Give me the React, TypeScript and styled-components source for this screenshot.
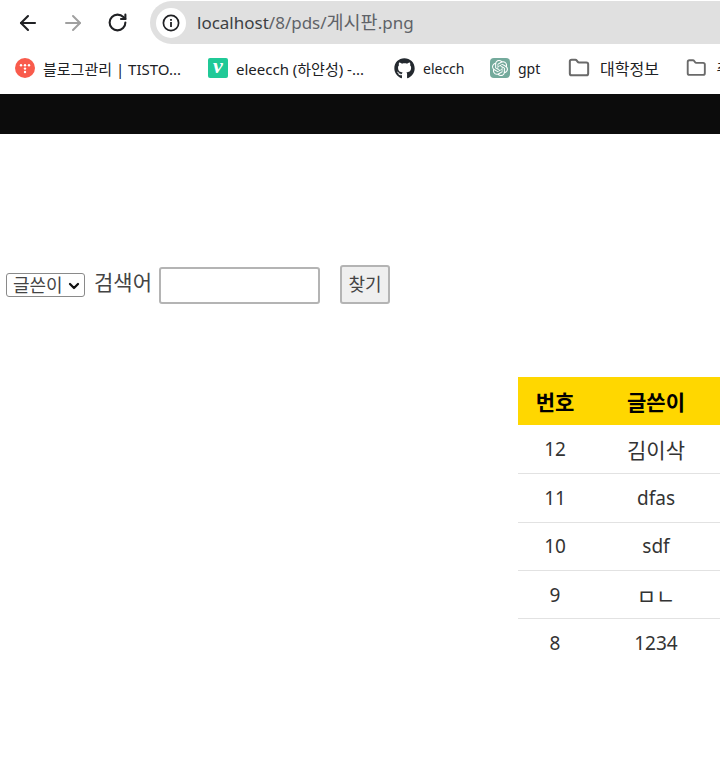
import styled, { createGlobalStyle } from "styled-components";
import { ArrowLeft, ArrowRight, RotateCw, Folder, ChevronDown } from "lucide-react";
import { FaGithub } from "react-icons/fa";
import { SiOpenai } from "react-icons/si";

const FONT = `"Malgun Gothic", "Noto Sans", "Noto Sans CJK KR", sans-serif`;

const rows = [
  { no: 12, writer: "김이삭", size: 21 },
  { no: 11, writer: "dfas", size: 19 },
  { no: 10, writer: "sdf", size: 19 },
  { no: 9, writer: "ㅁㄴ", size: 21 },
  { no: 8, writer: "1234", size: 19 },
];

const App = () => {
  return (
    <Page>
      <GlobalStyle />
      <Toolbar>
        <NavBtn>
          <ArrowLeft size={24} strokeWidth={2.1} color="#202124" />
        </NavBtn>
        <NavBtn>
          <ArrowRight size={24} strokeWidth={2} color="#a0a0a0" />
        </NavBtn>
        <NavBtn>
          <RotateCw size={21} strokeWidth={2.4} color="#202124" />
        </NavBtn>
        <UrlBar>
          <InfoCircle>
            <svg width="20" height="20" viewBox="0 0 20 20">
              <circle cx="10" cy="10" r="7.6" fill="none" stroke="#202124" strokeWidth="1.7" />
              <rect x="9.1" y="9" width="1.8" height="5" fill="#202124" />
              <rect x="9.1" y="6" width="1.8" height="1.8" fill="#202124" />
            </svg>
          </InfoCircle>
          <UrlText>
            <UrlHost>localhost</UrlHost>/8/pds/<UrlHangul>게시판</UrlHangul>.png
          </UrlText>
        </UrlBar>
      </Toolbar>
      <Bookmarks>
        <Bookmark $width={193}>
          <TistoryIcon viewBox="0 0 20 20">
            <circle cx="10" cy="10" r="10" fill="#f95b4c" />
            <circle cx="6" cy="7.2" r="1.2" fill="#fff" />
            <circle cx="10" cy="7.2" r="1.2" fill="#fff" />
            <circle cx="14" cy="7.2" r="1.2" fill="#fff" />
            <circle cx="10" cy="10.6" r="1.2" fill="#fff" />
            <circle cx="10" cy="14" r="1.2" fill="#fff" />
          </TistoryIcon>
          <BookmarkLabel $size={15}>블로그관리 | TISTO...</BookmarkLabel>
        </Bookmark>
        <Bookmark $width={186}>
          <VelogIcon>v</VelogIcon>
          <BookmarkLabel $size={15}>eleecch (하얀성) -...</BookmarkLabel>
        </Bookmark>
        <Bookmark $width={96}>
          <FaGithub size={21} color="#24292f" />
          <BookmarkLabel $size={14}>elecch</BookmarkLabel>
        </Bookmark>
        <Bookmark $width={78}>
          <GptIcon>
            <SiOpenai size={16} color="#fff" />
          </GptIcon>
          <BookmarkLabel $size={14}>gpt</BookmarkLabel>
        </Bookmark>
        <Bookmark $width={118} $gap={10}>
          <Folder size={22} color="#6a6a6a" strokeWidth={2.2} />
          <BookmarkLabel $size={16}>대학정보</BookmarkLabel>
        </Bookmark>
        <Bookmark $width={60} $gap={10}>
          <Folder size={22} color="#6a6a6a" strokeWidth={2.2} />
          <BookmarkLabel $size={16}>취업</BookmarkLabel>
        </Bookmark>
      </Bookmarks>
      <DarkBar />
      <SearchForm>
        <SelectWrap>
          <Select defaultValue="writer">
            <option value="writer">글쓴이</option>
          </Select>
          <SelectChevron>
            <ChevronDown size={16} strokeWidth={3.4} color="#111" />
          </SelectChevron>
        </SelectWrap>
        <SearchLabel>검색어</SearchLabel>
        <SearchInput />
        <FindBtn>찾기</FindBtn>
      </SearchForm>
      <Table>
        <thead>
          <tr>
            <Th $width={74}>번호</Th>
            <Th $width={128}>글쓴이</Th>
          </tr>
        </thead>
        <tbody>
          {rows.map((row, i) => (
            <tr key={row.no}>
              <Td $last={i === rows.length - 1} $size={19}>
                {row.no}
              </Td>
              <Td $last={i === rows.length - 1} $size={row.size}>
                {row.writer}
              </Td>
            </tr>
          ))}
        </tbody>
      </Table>
    </Page>
  );
};

export default App;

const GlobalStyle = createGlobalStyle`
  html, body {
    margin: 0;
    padding: 0;
    background: #fff;
    overflow: hidden;
  }
`;

const Page = styled.div`
  width: 720px;
  height: 782px;
  overflow: hidden;
  font-family: ${FONT};
  background: #fff;
`;

const Toolbar = styled.div`
  display: flex;
  align-items: center;
  height: 45px;
  padding-left: 5px;
  box-sizing: border-box;
`;

const NavBtn = styled.div`
  width: 45px;
  height: 44px;
  display: flex;
  align-items: center;
  justify-content: center;
  flex: none;
`;

const UrlBar = styled.div`
  flex: none;
  width: 600px;
  height: 43px;
  margin-left: 10px;
  background: #e0e0e0;
  border-radius: 22px 0 0 22px;
  display: flex;
  align-items: center;
  padding-left: 6px;
  box-sizing: border-box;
`;

const InfoCircle = styled.div`
  width: 30px;
  height: 30px;
  border-radius: 50%;
  background: #fff;
  display: flex;
  align-items: center;
  justify-content: center;
  flex: none;
`;

const UrlText = styled.span`
  margin-left: 11px;
  margin-top: -3px;
  font-size: 17px;
  color: #5f6368;
  white-space: nowrap;
`;

const UrlHost = styled.span`
  color: #3c4043;
`;

const UrlHangul = styled.span`
  font-size: 18.5px;
`;

const Bookmarks = styled.div`
  display: flex;
  align-items: center;
  height: 49px;
  padding: 0 0 3px 15px;
  box-sizing: border-box;
  overflow: hidden;
`;

const Bookmark = styled.div<{ $width: number; $gap?: number }>`
  display: flex;
  align-items: center;
  gap: ${(p) => p.$gap ?? 8}px;
  flex: none;
  width: ${(p) => p.$width}px;
`;

const BookmarkLabel = styled.span<{ $size: number }>`
  font-size: ${(p) => p.$size}px;
  color: #202124;
  white-space: nowrap;
`;

const TistoryIcon = styled.svg`
  width: 20px;
  height: 20px;
  flex: none;
`;

const GptIcon = styled.span`
  width: 20px;
  height: 20px;
  border-radius: 4px;
  background: #74aa9c;
  display: flex;
  align-items: center;
  justify-content: center;
  flex: none;
`;

const VelogIcon = styled.span`
  width: 20px;
  height: 20px;
  border-radius: 2px;
  background: #20c997;
  color: #fff;
  font-family: "Liberation Serif", serif;
  font-style: italic;
  font-weight: bold;
  font-size: 22px;
  line-height: 16px;
  text-align: center;
  flex: none;
`;

const DarkBar = styled.div`
  height: 40px;
  background: #0c0c0c;
`;

const SearchForm = styled.div`
  display: flex;
  align-items: flex-start;
  height: 39px;
  margin-top: 131px;
  padding-left: 6px;
`;

const SelectWrap = styled.div`
  position: relative;
  width: 79px;
  height: 24px;
  margin-top: 8px;
  flex: none;
`;

const Select = styled.select`
  appearance: none;
  display: block;
  width: 100%;
  height: 100%;
  font-family: ${FONT};
  font-size: 18px;
  line-height: 22px;
  color: #444;
  background: #fff;
  border: 1px solid #8a8a8a;
  border-radius: 3px;
  padding: 0 0 0 6px;
`;

const SelectChevron = styled.span`
  position: absolute;
  right: 3px;
  top: 5px;
  display: flex;
  pointer-events: none;
`;

const SearchLabel = styled.span`
  margin-left: 9px;
  font-size: 21px;
  line-height: 34px;
  color: #444;
`;

const SearchInput = styled.input`
  width: 161px;
  height: 37px;
  margin-left: 7px;
  margin-top: 2px;
  padding: 0;
  box-sizing: border-box;
  border: 2px solid #b4b4b4;
  border-radius: 3px;
`;

const FindBtn = styled.button`
  width: 50px;
  height: 39px;
  margin-left: 20px;
  padding: 0 0 3px;
  box-sizing: border-box;
  font-family: ${FONT};
  font-size: 18px;
  color: #444;
  background: #efefef;
  border: 2px solid #b4b4b4;
  border-radius: 3px;
`;

const Table = styled.table`
  border-collapse: collapse;
  margin: 73px 0 0 518px;
  table-layout: fixed;
  width: 202px;
`;

const Th = styled.th<{ $width: number }>`
  width: ${(p) => p.$width}px;
  height: 48.4px;
  padding: 0;
  background: #ffd700;
  color: #000;
  font-size: 21px;
  font-weight: bold;
  text-align: center;
`;

const Td = styled.td<{ $last?: boolean; $size: number }>`
  height: 48.33px;
  padding: 0;
  box-sizing: border-box;
  font-size: ${(p) => p.$size}px;
  color: #333;
  text-align: center;
  border-bottom: ${(p) => (p.$last ? "none" : "1px solid #e2e2e2")};
`;
